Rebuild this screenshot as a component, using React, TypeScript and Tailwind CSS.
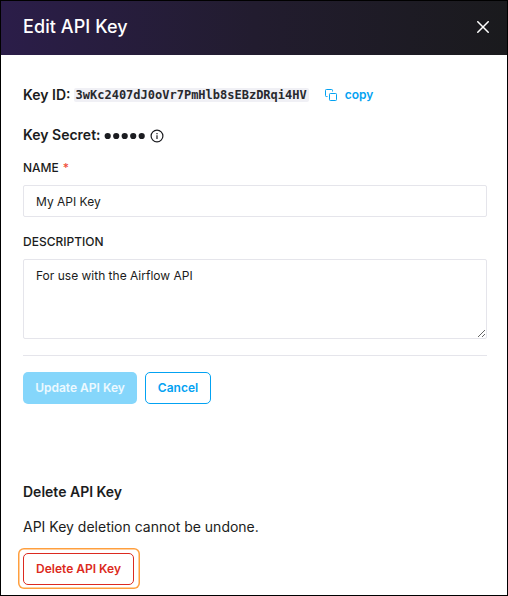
import React from "react";

function CopyIcon() {
  return (
    <svg className="mt-[2px]" width="14" height="14" viewBox="0 0 14 14" fill="none" stroke="#03a2f2" strokeWidth="1">
      <rect x="4.500" y="4.500" width="7" height="7" rx="0.800" />
      <path d="M2.500 7.500H1.300a.8.8 0 0 1-.8-.8V1.300a.8.8 0 0 1 .8-.8h5.400a.8.8 0 0 1 .8.800v1.200" />
    </svg>
  );
}

function InfoIcon() {
  return (
    <svg width="14" height="14" viewBox="0 0 14 14" fill="none" stroke="#1b1c20" strokeWidth="1.2">
      <circle cx="7" cy="7" r="5.900" />
      <path d="M7 6.300v3.700M7 4v1.200" />
    </svg>
  );
}

function Dots() {
  return (
    <svg width="42" height="8" viewBox="0 0 42 8" fill="#1b1c20">
      {[3.7, 12.2, 20.7, 29.2, 37.7].map((x) => (
        <circle key={x} cx={x} cy="4" r="3.100" />
      ))}
    </svg>
  );
}

export default function App() {
  return (
    <div className="flex h-[596px] w-[508px] flex-col overflow-hidden border border-black bg-white font-['Inter',sans-serif] text-[#1b1c20]">
      <header className="flex h-[54px] shrink-0 items-center justify-between bg-linear-to-r from-[#2b1d49] via-[#221c2f] to-[#1a1a1d] pr-[18px] pb-[2px] pl-[22px]">
        <h1 className="text-[18px] leading-6 font-medium tracking-[0.08px] text-white">Edit API Key</h1>
        <button aria-label="Close" className="block">
          <svg width="12" height="12" viewBox="0 0 12 12" stroke="white" strokeWidth="1.5">
            <path d="M.3.3 11.700 11.700M11.700.3.3 11.700" />
          </svg>
        </button>
      </header>
      <main className="flex flex-col pr-5 pl-[22px]">
        <div className="mt-[30px] flex h-5 items-center">
          <span className="text-[14px] leading-5 font-semibold">Key ID:</span>
          <code className="ml-[3px] flex h-[14px] items-center rounded-[2px] bg-[#f0f0f5] px-[2px] font-['DejaVu_Sans_Mono',monospace] text-[12px] leading-[14px] font-bold text-[#28292e]">
            3wKc2407dJ0oVr7PmHlb8sEBzDRqi4HV
          </code>
          <button className="ml-4 flex items-center gap-[6px] text-[12px] leading-5 font-semibold text-[#03a2f2]">
            <CopyIcon />
            copy
          </button>
        </div>
        <div className="mt-5 flex h-5 items-center">
          <span className="mr-[3px] text-[14px] leading-5 font-semibold">Key Secret:</span>
          <span className="mt-[2px] flex items-center gap-1">
            <Dots />
            <InfoIcon />
          </span>
        </div>
        <label className="mt-[13px] flex h-5 items-center text-[12px] font-medium">
          NAME <span className="ml-1 text-[#f0503c]">*</span>
        </label>
        <input
          className="mt-[7px] h-8 w-full rounded-[2px] border border-[#e5e5eb] px-3 pt-px text-[12px] outline-none"
          defaultValue="My API Key"
        />
        <label className="mt-[15px] flex h-5 items-center text-[12px] font-medium">DESCRIPTION</label>
        <textarea
          className="mt-[7px] block h-20 w-full rounded-[2px] border border-[#e5e5eb] px-3 py-[7px] text-[12px] leading-[18px] outline-none"
          defaultValue="For use with the Airflow API"
        />
        <div className="mt-4 h-px bg-[#e5e5eb]" />
        <div className="mt-4 flex gap-2">
          <button className="h-8 w-[114px] rounded-[5px] bg-[#85d6fb] text-[12px] font-semibold text-white/85">Update API Key</button>
          <button className="h-8 w-[66px] rounded-[5px] border border-[#03a2f2] text-[12px] font-semibold text-[#03a2f2]">Cancel</button>
        </div>
        <h2 className="mt-[78px] text-[14px] leading-5 font-semibold">Delete API Key</h2>
        <p className="mt-[15px] text-[14px] leading-5">API Key deletion cannot be undone.</p>
        <div className="mt-[11px] -ml-[5px] flex h-[41px] w-[122px] rounded-[6px] pt-[5px] pl-[5px] shadow-[inset_0_0_0_1.5px_#ff9f3e]">
          <button className="h-8 w-[111px] rounded-[5px] border border-[#dc2a20] text-[12px] font-semibold text-[#dc2a20]">Delete API Key</button>
        </div>
      </main>
    </div>
  );
}
